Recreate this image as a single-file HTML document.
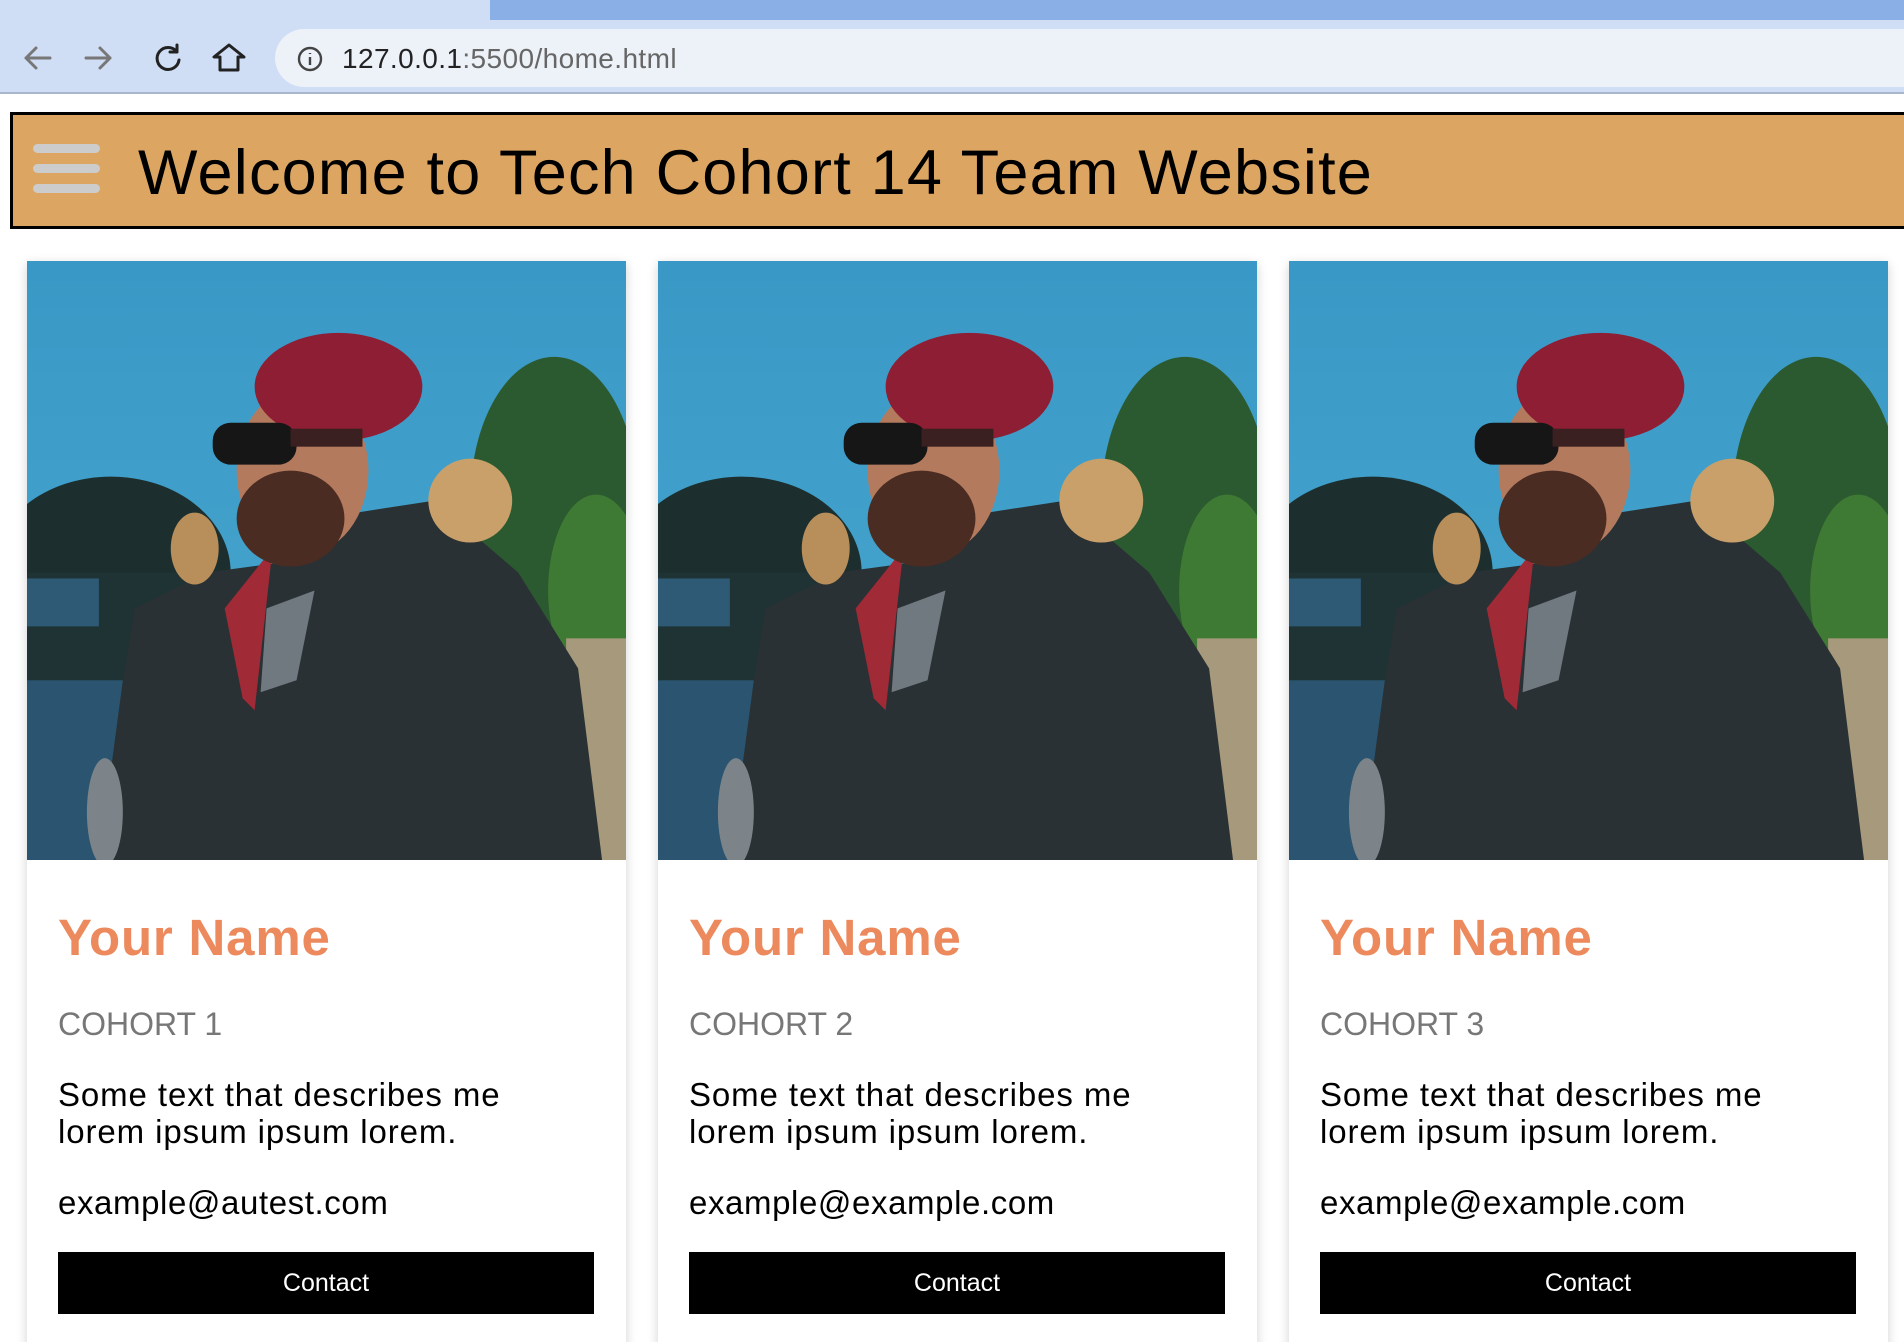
<!DOCTYPE html>
<html><head><meta charset="utf-8"><style>
*{margin:0;padding:0;box-sizing:border-box}
html,body{width:1904px;height:1342px;overflow:hidden;background:#fff;font-family:"Liberation Sans",sans-serif;position:relative}
.abs{position:absolute}
.tabs{left:0;top:0;width:1904px;height:24px;background:#8aaee6}
.tab1{left:0;top:0;width:490px;height:24px;background:#cfddf5}
.toolbar{left:0;top:20px;width:1904px;height:74px;background:#cfddf5;border-bottom:2px solid #aab6cc}
.addr{left:275px;top:29px;width:1700px;height:58px;background:#edf1f8;border-radius:29px}
.url{left:342px;top:43px;font-size:28px;color:#222;letter-spacing:0.4px}
.url span{color:#666}
.header{left:10px;top:112px;width:1920px;height:117px;background:#dca662;border:3px solid #000}
.bar{left:33px;width:67px;height:9px;background:#cccccc;border-radius:5px}
.title{left:138px;top:137px;font-size:63px;color:#000;white-space:nowrap;letter-spacing:1.2px}
.card{top:261px;width:599px;height:1100px;background:#fff;box-shadow:0 3px 10px rgba(0,0,0,.18)}
.card svg{display:block;width:599px;height:599px}
.name{position:absolute;left:31px;top:647px;font-size:51px;font-weight:bold;color:#ec8a5e;white-space:nowrap;letter-spacing:0.8px}
.coh{position:absolute;left:31px;top:745px;font-size:32px;color:#777}
.desc{position:absolute;left:31px;top:815px;font-size:33px;line-height:37px;color:#000;letter-spacing:0.9px}
.mail{position:absolute;left:31px;top:923px;font-size:33px;color:#000;letter-spacing:0.6px}
.btn{position:absolute;left:31px;top:991px;width:536px;height:62px;background:#000;color:#fff;font-size:25px;text-align:center;line-height:62px}
</style></head><body>
<svg width="0" height="0" style="position:absolute"><defs>
<linearGradient id="sk" x1="0" y1="0" x2="0" y2="1"><stop offset="0" stop-color="#3a98c6"/><stop offset="1" stop-color="#4aaad0"/></linearGradient>
<g id="photo">
<rect width="100" height="100" fill="url(#sk)"/>
<ellipse cx="14" cy="52" rx="20" ry="16" fill="#1c2f2e"/>
<rect x="0" y="52" width="33" height="20" fill="#1f3234"/>
<rect x="0" y="53" width="12" height="8" fill="#2e5a76"/>
<ellipse cx="88" cy="40" rx="14" ry="24" fill="#2c5a30"/>
<ellipse cx="95" cy="55" rx="8" ry="16" fill="#3f7a34"/>
<rect x="0" y="70" width="20" height="30" fill="#2a5470"/>
<rect x="90" y="63" width="10" height="37" fill="#a79a7c"/>
<polygon points="12,100 16,70 18,58 30,52 45,50 55,42 68,40 82,52 92,68 96,100" fill="#293134"/>
<polygon points="33,58 41,48 38,75 36,73" fill="#a02a35"/>
<polygon points="40,58 48,55 45,70 39,72" fill="#707880"/>
<ellipse cx="74" cy="40" rx="7" ry="7" fill="#c9a06a"/>
<ellipse cx="28" cy="48" rx="4" ry="6" fill="#b88e5a"/>
<ellipse cx="46" cy="35" rx="11" ry="14" fill="#b47a5e"/>
<ellipse cx="44" cy="43" rx="9" ry="8" fill="#4a2c22"/>
<ellipse cx="52" cy="21" rx="14" ry="9" fill="#8e1e33"/>
<rect x="31" y="27" width="14" height="7" rx="3" fill="#161616"/>
<rect x="44" y="28" width="12" height="3" fill="#3a2020"/>
<ellipse cx="13" cy="92" rx="3" ry="9" fill="#7c848a"/>
</g></defs></svg>
<div class="abs tabs"></div><div class="abs tab1"></div>
<div class="abs toolbar"></div>
<svg class="abs" style="left:20px;top:40px" width="230" height="36" viewBox="0 0 230 36" fill="none" stroke-width="3" stroke-linecap="round" stroke-linejoin="round">
<path d="M30 18H6M16 8L6 18L16 28" stroke="#777"/>
<path d="M66 18H90M80 8L90 18L80 28" stroke="#777"/>
<path d="M157 12A11 11 0 1 0 159 20M157 5V12H150" stroke="#222"/>
<path d="M218 30V17H224L209 5L194 17H200V30Z" stroke="#222"/>
</svg>
<div class="abs addr"></div>
<svg class="abs" style="left:296px;top:45px" width="28" height="28" viewBox="0 0 28 28" fill="none" stroke="#444" stroke-width="2.4"><circle cx="14" cy="14" r="11"/><path d="M14 12V20M14 8V9"/></svg>
<div class="abs url">127.0.0.1<span>:5500/home.html</span></div>
<div class="abs header"></div>
<div class="abs bar" style="top:144px"></div>
<div class="abs bar" style="top:164px"></div>
<div class="abs bar" style="top:184px"></div>
<div class="abs title">Welcome to Tech Cohort 14 Team Website</div>

<div class="abs card" style="left:27px">
<svg viewBox="0 0 100 100" preserveAspectRatio="none"><use href="#photo"/></svg>
<div class="name">Your Name</div><div class="coh">COHORT 1</div>
<div class="desc">Some text that describes me<br>lorem ipsum ipsum lorem.</div>
<div class="mail">example@autest.com</div><div class="btn">Contact</div>
</div>

<div class="abs card" style="left:658px">
<svg viewBox="0 0 100 100" preserveAspectRatio="none"><use href="#photo"/></svg>
<div class="name">Your Name</div><div class="coh">COHORT 2</div>
<div class="desc">Some text that describes me<br>lorem ipsum ipsum lorem.</div>
<div class="mail">example@example.com</div><div class="btn">Contact</div>
</div>

<div class="abs card" style="left:1289px">
<svg viewBox="0 0 100 100" preserveAspectRatio="none"><use href="#photo"/></svg>
<div class="name">Your Name</div><div class="coh">COHORT 3</div>
<div class="desc">Some text that describes me<br>lorem ipsum ipsum lorem.</div>
<div class="mail">example@example.com</div><div class="btn">Contact</div>
</div>
</body></html>
